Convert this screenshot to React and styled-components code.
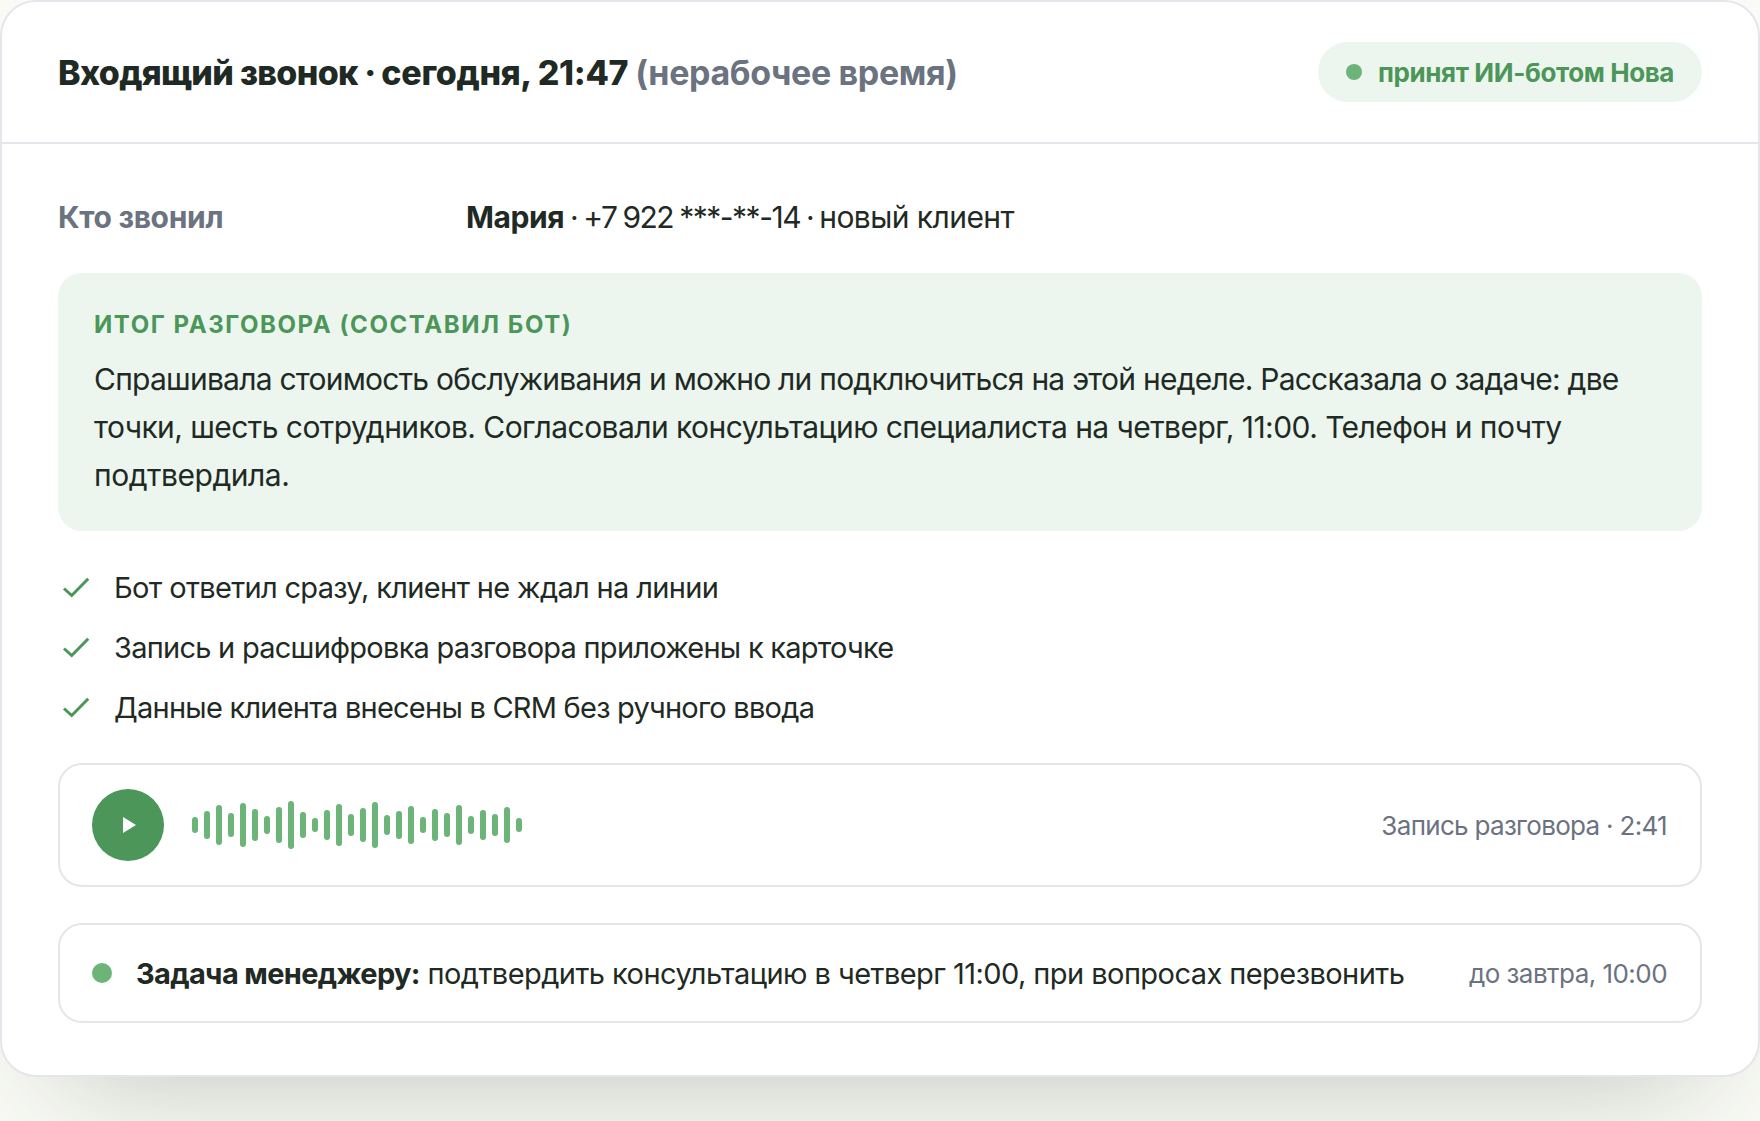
import React from 'react';
import styled, { createGlobalStyle } from 'styled-components';

const GlobalStyle = createGlobalStyle`
  * {
    box-sizing: border-box;
  }

  body {
    margin: 0;
    min-height: 1121px;
    overflow: hidden;
    background-color: #fafbf6;
    color: #1f2a24;
    font-family: Inter, 'Noto Sans', sans-serif;
    -webkit-font-smoothing: antialiased;
  }
`;

const Card = styled.article`
  width: 1760px;
  height: 1077px;
  background-color: #fff;
  border: 2px solid #e5e5eb;
  border-radius: 36px;
  box-shadow: 0 60px 120px -60px rgba(31, 42, 36, 0.28);
`;

const CardHeader = styled.header`
  display: flex;
  justify-content: space-between;
  align-items: center;
  height: 142px;
  padding: 0 56px;
  border-bottom: 2px solid #e5e5eb;
`;

const Title = styled.h2`
  margin: 0;
  padding-top: 2px;
  font-size: 34px;
  font-weight: 800;
  line-height: 54px;
  white-space: nowrap;
`;

const Tracked = styled.span`
  letter-spacing: ${(props) => props.$ls}px;
  word-spacing: ${(props) => props.$ws || 0}px;
`;

const Strong = styled(Tracked)`
  font-weight: 700;
`;

const Muted = styled(Tracked)`
  color: #6b7280;
  font-weight: 700;
`;

const Badge = styled.div`
  display: flex;
  align-items: center;
  gap: 16px;
  width: 384px;
  height: 60px;
  padding: 0 28px;
  border-radius: 30px;
  background-color: #ecf6ef;
  color: #4c9659;
  font-size: 26px;
  font-weight: 700;
  letter-spacing: -0.4px;
  white-space: nowrap;
`;

const Dot = styled.span`
  flex: none;
  width: ${(props) => props.$size}px;
  height: ${(props) => props.$size}px;
  border-radius: 50%;
  background-color: #6cb478;
`;

const CardBody = styled.div`
  padding: 48px 56px 0;
`;

const CallerRow = styled.div`
  display: grid;
  grid-template-columns: 408px 1fr;
  height: 50px;
  font-size: 30px;
  line-height: 50px;
  white-space: nowrap;
`;

const Summary = styled.section`
  height: 258px;
  margin-top: 31px;
  padding: 33px 36px;
  border-radius: 24px;
  background-color: #ecf6ef;
`;

const SummaryTitle = styled.h3`
  margin: 0 0 11px;
  color: #4c9659;
  font-size: 24px;
  font-weight: 700;
  letter-spacing: 1.57px;
  line-height: 38px;
  text-transform: uppercase;
`;

const SummaryLine = styled(Tracked)`
  display: block;
  font-size: 30px;
  line-height: 48px;
  white-space: nowrap;
`;

const CheckList = styled.ul`
  display: flex;
  flex-direction: column;
  gap: 12px;
  margin: 32px 0 0;
  padding: 0;
  list-style: none;
`;

const CheckItem = styled.li`
  display: flex;
  align-items: center;
  gap: 20px;
  height: 48px;
  font-size: 29px;
  white-space: nowrap;
`;

const Panel = styled.section`
  display: flex;
  align-items: center;
  height: ${(props) => props.$height}px;
  margin-top: ${(props) => props.$top}px;
  padding: 0 32px;
  border: 2px solid #e5e5eb;
  border-radius: 24px;
`;

const PlayButton = styled.button`
  display: flex;
  align-items: center;
  justify-content: center;
  width: 72px;
  height: 72px;
  padding: 0 0 0 3px;
  border: none;
  border-radius: 50%;
  background-color: #4c9659;
`;

const Wave = styled.div`
  display: flex;
  align-items: center;
  gap: 6px;
  margin-left: 28px;
`;

const Bar = styled.span`
  width: 6px;
  border-radius: 3px;
  background-color: #6cb478;
`;

const Meta = styled(Tracked)`
  margin-left: auto;
  padding-right: 1px;
  color: #6b7280;
  font-size: 26px;
  white-space: nowrap;
`;

const Task = styled.span`
  margin-left: 24px;
  font-size: 29px;
  white-space: nowrap;
`;

const summary = [
  {
    text: 'Спрашивала стоимость обслуживания и можно ли подключиться на этой неделе. Рассказала о задаче: две',
    ls: -0.76,
  },
  {
    text: 'точки, шесть сотрудников. Согласовали консультацию специалиста на четверг, 11:00. Телефон и почту',
    ls: -0.56,
  },
  { text: 'подтвердила.', ls: -0.47 },
];

const checks = [
  { text: 'Бот ответил сразу, клиент не ждал на линии', ls: -0.66 },
  { text: 'Запись и расшифровка разговора приложены к карточке', ls: -0.745 },
  { text: 'Данные клиента внесены в CRM без ручного ввода', ls: -0.76 },
];

const bars = [
  16, 28, 40, 24, 44, 32, 18, 36, 48, 26, 14, 30, 42, 22,
  34, 46, 20, 28, 38, 16, 32, 24, 40, 18, 30, 22, 36, 14,
];

const CheckIcon = () => (
  <svg width="36" height="36" viewBox="0 0 36 36" fill="none">
    <path d="M6 19.5l7.7 7L30.2 9.7" stroke="#4c9659" strokeWidth="3" />
  </svg>
);

const App = () => {
  return (
    <>
      <GlobalStyle />
      <Card>
        <CardHeader>
          <Title>
            <Tracked $ls={-0.67}>Входящий звонок</Tracked>
            <Tracked $ls={-1.1}> · </Tracked>
            <Tracked $ls={-0.32}>сегодня, 21:47 </Tracked>
            <Muted $ls={-0.36}>(нерабочее время)</Muted>
          </Title>
          <Badge>
            <Dot $size={16} />
            <span>принят ИИ-ботом Нова</span>
          </Badge>
        </CardHeader>

        <CardBody>
          <CallerRow>
            <Muted $ls={-0.32}>Кто звонил</Muted>
            <span>
              <Strong $ls={-0.45}>Мария</Strong>
              <Tracked $ls={-1.5} $ws={-0.9}> · +7 922 ***-**-14 · </Tracked>
              <Tracked $ls={-0.56}>новый клиент</Tracked>
            </span>
          </CallerRow>

          <Summary>
            <SummaryTitle>Итог разговора (составил бот)</SummaryTitle>
            {summary.map(({ text, ls }) => (
              <SummaryLine key={text} $ls={ls}>{text}</SummaryLine>
            ))}
          </Summary>

          <CheckList>
            {checks.map(({ text, ls }) => (
              <CheckItem key={text}>
                <CheckIcon />
                <Tracked $ls={ls}>{text}</Tracked>
              </CheckItem>
            ))}
          </CheckList>

          <Panel $height={124} $top={32}>
            <PlayButton aria-label="Прослушать">
              <svg width="13" height="16" viewBox="0 0 13 16">
                <path d="M0 0l13 8-13 8z" fill="#fff" />
              </svg>
            </PlayButton>
            <Wave>
              {bars.map((height, i) => (
                <Bar key={i} style={{ height }} />
              ))}
            </Wave>
            <Meta $ls={-0.69}>Запись разговора · 2:41</Meta>
          </Panel>

          <Panel $height={100} $top={36}>
            <Dot $size={20} />
            <Task>
              <Strong $ls={-0.66}>Задача менеджеру:</Strong>
              <Tracked $ls={-0.56}> подтвердить консультацию в четверг 11:00, при вопросах перезвонить</Tracked>
            </Task>
            <Meta $ls={-0.54}>до завтра, 10:00</Meta>
          </Panel>
        </CardBody>
      </Card>
    </>
  );
};

export default App;
